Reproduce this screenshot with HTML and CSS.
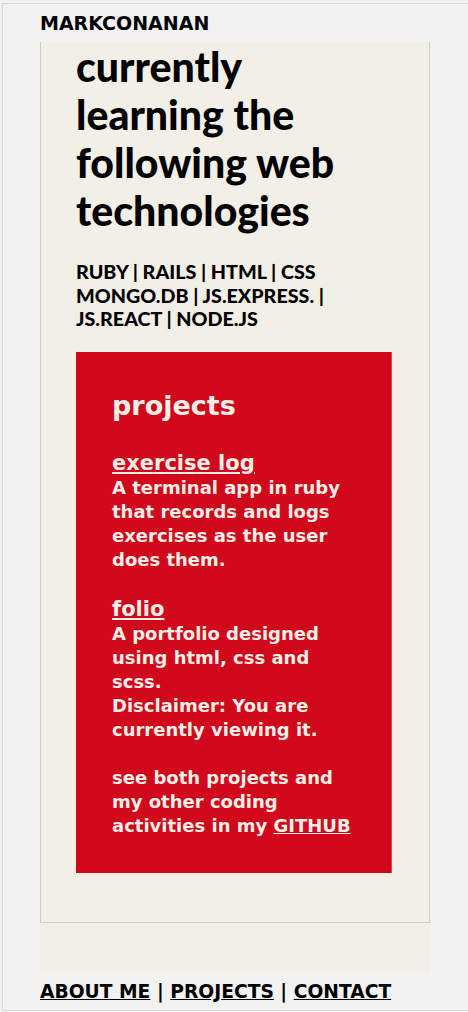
FILE: index.html
```html
<!DOCTYPE html>
<html lang="en">
<head>
<meta charset="utf-8">
<title>markconanan</title>
<link rel="stylesheet" href="styles.css">
</head>
<body>
<div class="frame">
  <header class="site-header">MARKCONANAN</header>
  <main class="main">
    <section class="panel">
      <h1 class="title">currently learning the following web technologies</h1>
      <p class="tech">RUBY | RAILS | HTML | CSS MONGO.DB | JS.EXPRESS. | JS.REACT | NODE.JS</p>
      <div class="projects">
        <h2 class="projects-title">projects</h2>
        <div class="project">
          <a class="project-name" href="#">exercise log</a>
          <p class="project-desc">A terminal app in ruby that records and logs exercises as the user does them.</p>
        </div>
        <div class="project">
          <a class="project-name" href="#">folio</a>
          <p class="project-desc">A portfolio designed using html, css and scss.<br>Disclaimer: You are currently viewing it.</p>
        </div>
        <p class="project-desc more">see both projects and my other coding activities in my <a class="gh" href="#">GITHUB</a></p>
      </div>
    </section>
  </main>
  <nav class="site-nav"><a href="#">ABOUT ME</a> | <a href="#">PROJECTS</a> | <a href="#">CONTACT</a></nav>
</div>
</body>
</html>
```
FILE: styles.css
```css
html, body {
  margin: 0;
  padding: 0;
  background: #f2f2f2;
}
body {
  font-family: "DejaVu Sans", sans-serif;
  color: #000;
}
.frame {
  margin: 3px 0 0 2px;
  height: 1006px;
  border: 1px solid #d8d8d8;
  border-right: none;
  padding-left: 37px;
  overflow: hidden;
}
.site-header {
  height: 38px;
  font-size: 19px;
  font-weight: 600;
  line-height: 38px;
}
.main {
  width: 390px;
  background: #f2efe7;
  padding-bottom: 50px;
}
.panel {
  height: 881px;
  box-sizing: border-box;
  border: 1px solid #cfccc6;
  border-top: none;
  padding: 1px 37px 0 35px;
}
.title {
  margin: 0;
  font-family: "Lato", sans-serif;
  font-weight: 900;
  font-size: 41px;
  line-height: 48px;
}
.tech {
  margin: 25px 0 0;
  font-family: "Lato", sans-serif;
  font-weight: 900;
  font-size: 19.7px;
  line-height: 23.5px;
}
.projects {
  margin-top: 21px;
  background: #d1081b;
  color: #f4efe6;
  padding: 36px 35px 35px 36px;
  border-right: 1px solid #e0454f;
}
.projects-title {
  margin: 0 0 26px;
  font-size: 27px;
  font-weight: 700;
  line-height: 36px;
}
.project {
  margin-bottom: 24px;
}
.project-name {
  display: block;
  color: #f4efe6;
  font-size: 21px;
  font-weight: 700;
  line-height: 26px;
}
.project-desc {
  margin: 0;
  font-size: 18px;
  font-weight: 700;
  line-height: 24px;
}
.gh {
  color: #f4efe6;
}
.site-nav {
  margin-top: 5px;
  font-size: 18.7px;
  font-weight: 600;
  line-height: 28px;
}
.site-nav a {
  color: #000;
}
```
